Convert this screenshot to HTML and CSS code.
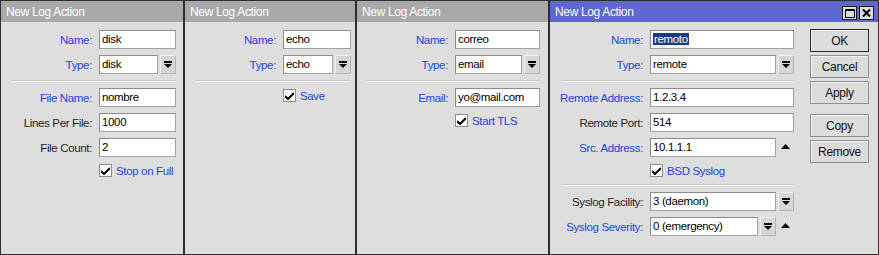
FILE: index.html
```html
<!DOCTYPE html>
<html lang="en">
<head>
    <meta charset="UTF-8">
    <title>New Log Action</title>
    <link rel="stylesheet" href="styles.css">
</head>
<body>
    <div class="desk">
        <!-- disk -->
        <section class="win w1">
            <header class="bar">New Log Action</header>
            <div class="form">
                <div class="row"><span class="lbl key">Name:</span><div class="field"><span class="input">disk</span></div></div>
                <div class="row"><span class="lbl key">Type:</span><div class="field"><span class="input">disk</span><span class="drop"><svg width="8" height="8" viewBox="0 0 8 8"><path d="M0 0h8v2H0zM0 3h8L4 7z"/></svg></span></div></div>
                <div class="sep"></div>
                <div class="row"><span class="lbl key">File Name:</span><div class="field"><span class="input">nombre</span></div></div>
                <div class="row"><span class="lbl">Lines Per File:</span><div class="field"><span class="input">1000</span></div></div>
                <div class="row"><span class="lbl">File Count:</span><div class="field"><span class="input">2</span></div></div>
                <div class="check"><span class="box"><svg width="9" height="8" viewBox="0 0 9 8"><path d="M0 4l3 3 6-6" fill="none" stroke="#000" stroke-width="2"/></svg></span>Stop on Full</div>
            </div>
        </section>

        <!-- echo -->
        <section class="win w2">
            <header class="bar">New Log Action</header>
            <div class="form">
                <div class="row"><span class="lbl key">Name:</span><div class="field"><span class="input">echo</span></div></div>
                <div class="row"><span class="lbl key">Type:</span><div class="field"><span class="input">echo</span><span class="drop"><svg width="8" height="8" viewBox="0 0 8 8"><path d="M0 0h8v2H0zM0 3h8L4 7z"/></svg></span></div></div>
                <div class="sep"></div>
                <div class="check"><span class="box"><svg width="9" height="8" viewBox="0 0 9 8"><path d="M0 4l3 3 6-6" fill="none" stroke="#000" stroke-width="2"/></svg></span>Save</div>
            </div>
        </section>

        <!-- email -->
        <section class="win w3">
            <header class="bar">New Log Action</header>
            <div class="form">
                <div class="row"><span class="lbl key">Name:</span><div class="field"><span class="input">correo</span></div></div>
                <div class="row"><span class="lbl key">Type:</span><div class="field"><span class="input">email</span><span class="drop"><svg width="8" height="8" viewBox="0 0 8 8"><path d="M0 0h8v2H0zM0 3h8L4 7z"/></svg></span></div></div>
                <div class="sep"></div>
                <div class="row"><span class="lbl key">Email:</span><div class="field"><span class="input">yo@mail.com</span></div></div>
                <div class="check"><span class="box"><svg width="9" height="8" viewBox="0 0 9 8"><path d="M0 4l3 3 6-6" fill="none" stroke="#000" stroke-width="2"/></svg></span>Start TLS</div>
            </div>
        </section>

        <!-- remote (active window) -->
        <section class="win w4 active">
            <header class="bar">
                New Log Action
                <span class="tools">
                    <span class="tbtn"><svg width="10" height="9" viewBox="0 0 10 9"><path d="M0.5 0.5h9v8h-9z M0.5 1.5h9" fill="none" stroke="#000"/></svg></span>
                    <span class="tbtn"><svg width="9" height="8" viewBox="0 0 9 8"><path d="M1 0.5l7 7M8 0.5l-7 7" fill="none" stroke="#000" stroke-width="2"/></svg></span>
                </span>
            </header>
            <div class="pane">
                <div class="form">
                    <div class="row"><span class="lbl key">Name:</span><div class="field"><span class="input"><span class="sel">remoto</span></span></div></div>
                    <div class="row"><span class="lbl key">Type:</span><div class="field"><span class="input">remote</span><span class="drop"><svg width="8" height="8" viewBox="0 0 8 8"><path d="M0 0h8v2H0zM0 3h8L4 7z"/></svg></span></div></div>
                    <div class="sep"></div>
                    <div class="row"><span class="lbl key">Remote Address:</span><div class="field"><span class="input">1.2.3.4</span></div></div>
                    <div class="row"><span class="lbl">Remote Port:</span><div class="field"><span class="input">514</span></div></div>
                    <div class="row"><span class="lbl key">Src. Address:</span><div class="field"><span class="input">10.1.1.1</span><span class="up"><svg width="9" height="5" viewBox="0 0 9 5"><path d="M0 5h9L4.5 0z"/></svg></span></div></div>
                    <div class="check"><span class="box"><svg width="9" height="8" viewBox="0 0 9 8"><path d="M0 4l3 3 6-6" fill="none" stroke="#000" stroke-width="2"/></svg></span>BSD Syslog</div>
                    <div class="sep"></div>
                    <div class="row"><span class="lbl">Syslog Facility:</span><div class="field"><span class="input">3 (daemon)</span><span class="drop"><svg width="8" height="8" viewBox="0 0 8 8"><path d="M0 0h8v2H0zM0 3h8L4 7z"/></svg></span></div></div>
                    <div class="row"><span class="lbl key">Syslog Severity:</span><div class="field"><span class="input">0 (emergency)</span><span class="drop"><svg width="8" height="8" viewBox="0 0 8 8"><path d="M0 0h8v2H0zM0 3h8L4 7z"/></svg></span><span class="up"><svg width="9" height="5" viewBox="0 0 9 5"><path d="M0 5h9L4.5 0z"/></svg></span></div></div>
                </div>
                <div class="buttons">
                    <button class="btn default">OK</button>
                    <button class="btn">Cancel</button>
                    <button class="btn">Apply</button>
                    <button class="btn gap">Copy</button>
                    <button class="btn">Remove</button>
                </div>
            </div>
        </section>
    </div>
</body>
</html>
```

FILE: styles.css
```css
body {
    margin: 0;
    font-family: "Liberation Sans", Arial, sans-serif;
    font-size: 11.5px;
    letter-spacing: -0.35px;
    color: #1e1e1e;
    background-color: #dedede;
}
.desk {
    display: flex;
    height: 255px;
    width: 879px;
}
.win {
    box-sizing: border-box;
    flex: none;
    height: 255px;
    border: 1px solid #2e2e2e;
    background-color: #dedede;
}
.w1 { width: 184px; --fw: 77px; }
.w2 { width: 172px; --fw: 68px; }
.w3 { width: 193px; --fw: 85px; }
.w4 { width: 330px; --fw: 144px; }

.bar {
    box-sizing: border-box;
    display: flex;
    height: 21px;
    padding: 3px 0 0 5px;
    line-height: 17px;
    font-size: 12px;
    color: #fff;
    background-color: #a9a9a9;
}
.active .bar {
    background-color: #5e66d0;
}
.tools {
    display: flex;
    gap: 2px;
    margin: 2px 4px 0 auto;
}
.tbtn {
    box-sizing: border-box;
    display: flex;
    align-items: center;
    justify-content: center;
    width: 15px;
    height: 14px;
    border: 1px solid #1a1a1a;
    background-color: #dcdcdc;
}

.pane {
    display: flex;
}
.form {
    padding-top: 8px;
}
.w4 .form {
    padding-left: 2px;
}
.row {
    display: flex;
    align-items: center;
    height: 19px;
    margin-bottom: 6px;
}
.lbl {
    width: 91px;
    margin-right: 7px;
    text-align: right;
    white-space: nowrap;
}
.key {
    color: #2442e6;
}
.field {
    display: flex;
    width: var(--fw);
    height: 19px;
}
.input {
    box-sizing: border-box;
    flex: 1;
    height: 19px;
    padding-left: 2px;
    line-height: 17px;
    color: #000;
    background-color: #fff;
    border: 1px solid #a2a2a2;
    border-top-color: #8c8c8c;
    border-left-color: #8c8c8c;
    white-space: nowrap;
    overflow: hidden;
}
.sel {
    background-color: #1b3a86;
    color: #fff;
    padding: 0 1px;
}
.drop {
    box-sizing: border-box;
    display: flex;
    align-items: center;
    justify-content: center;
    flex: none;
    width: 16px;
    height: 19px;
    margin-left: 2px;
    background-color: #d6d6d6;
    border: 1px solid #b4b4b4;
    border-top-color: #f2f2f2;
    border-left-color: #f2f2f2;
}
.up {
    display: flex;
    align-items: center;
    justify-content: center;
    flex: none;
    width: 18px;
    padding-bottom: 2px;
}
.sep {
    width: calc(89px + var(--fw));
    height: 0;
    margin: 3px 0 6px 9px;
    border-top: 1px solid #c6c6c6;
    border-bottom: 1px solid #f2f2f2;
}
.check {
    display: flex;
    align-items: center;
    height: 15px;
    margin: 0 0 6px 98px;
    color: #2442e6;
}
.box {
    box-sizing: border-box;
    display: flex;
    align-items: center;
    justify-content: center;
    width: 13px;
    height: 13px;
    margin-right: 4px;
    background-color: #fff;
    border: 1px solid #8c8c8c;
}

.buttons {
    display: flex;
    flex-direction: column;
    margin: 7px 0 0 16px;
}
.btn {
    box-sizing: border-box;
    width: 59px;
    height: 23px;
    margin-bottom: 3px;
    padding: 0;
    font-family: inherit;
    font-size: 12px;
    letter-spacing: -0.3px;
    color: #111;
    background-color: #dcdcdc;
    border: 1px solid #8e8e8e;
    box-shadow: inset 1px 1px 0 #f6f6f6;
}
.btn.default {
    border-color: #2a2a2a;
}
.btn.gap {
    margin-top: 7px;
}
```
